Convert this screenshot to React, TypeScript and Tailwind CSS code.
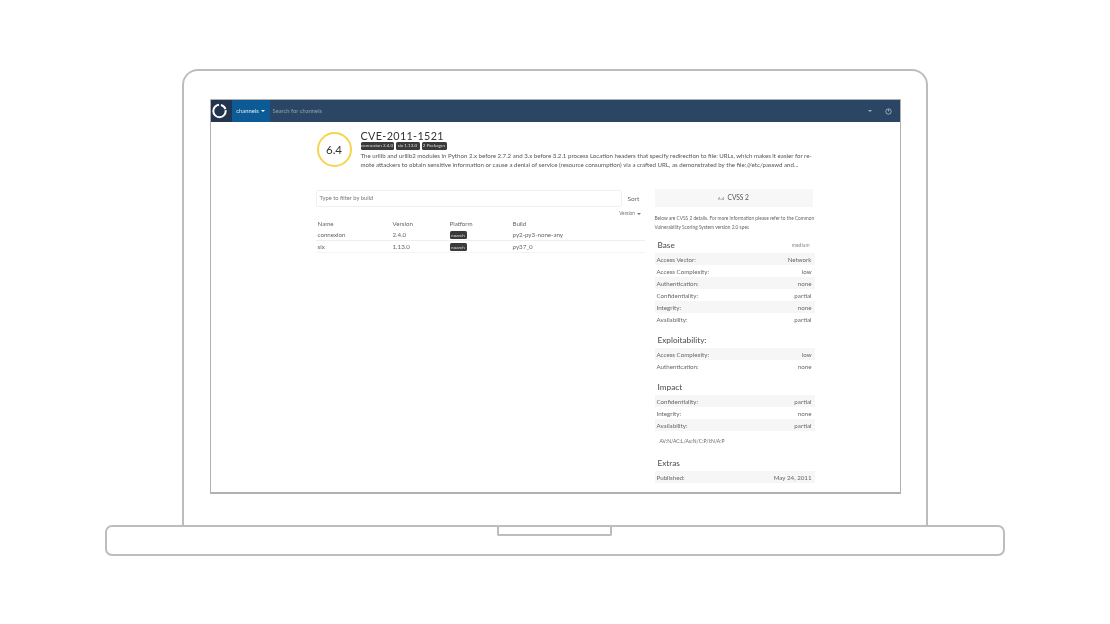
import React from 'react';

type Row = [string, string];

const base: Row[] = [
  ['Access Vector:', 'Network'],
  ['Access Complexity:', 'low'],
  ['Authentication:', 'none'],
  ['Confidentiality:', 'partial'],
  ['Integrity:', 'none'],
  ['Availability:', 'partial'],
];
const exploitability: Row[] = [
  ['Access Complexity:', 'low'],
  ['Authentication:', 'none'],
];
const impact: Row[] = [
  ['Confidentiality:', 'partial'],
  ['Integrity:', 'none'],
  ['Availability:', 'partial'],
];
const extras: Row[] = [['Published:', 'May 24, 2011']];

const Rows: React.FC<{ rows: Row[] }> = ({ rows }) => (
  <div className="w-[160px]">
    {rows.map(([k, v], i) => (
      <div
        key={k}
        className={`flex h-[12px] items-center justify-between pl-[2px] pr-[3px] text-[6.2px] text-[#666] ${i % 2 === 0 ? 'bg-[#f6f6f6]' : ''}`}
      >
        <span>{k}</span>
        <span>{v}</span>
      </div>
    ))}
  </div>
);

const Heading: React.FC<{ title: string; right?: string; className: string }> = ({ title, right, className }) => (
  <div className={`flex h-[12px] w-[160px] items-center justify-between pl-[3px] pr-[5px] ${className}`}>
    <span className="text-[8.2px] font-medium text-[#555]">{title}</span>
    {right && <span className="text-[5px] text-[#888]">{right}</span>}
  </div>
);

const Badge: React.FC<{ children: React.ReactNode; className?: string }> = ({ children, className }) => (
  <span className={`flex h-[7.5px] items-center justify-center rounded-[1.5px] bg-[#3a3a3a] text-[4.6px] leading-none text-[#ddd] ${className ?? ''}`}>
    {children}
  </span>
);

const Browser: React.FC = () => (
  <div className="flex h-[395px] w-[691px] flex-col overflow-hidden border border-b-2 border-[#b0b0b0] bg-white font-['Lato',sans-serif]">
    {/* top bar */}
    <div className="flex h-[22px] shrink-0 items-center bg-[#2a4664] blur-[0.4px]">
      <div className="flex h-full w-[21px] items-center justify-start bg-[#23344f]">
        <svg width="18" height="18" viewBox="0 0 18 18">
          <circle cx="8.5" cy="9" r="6.2" fill="none" stroke="#fff" strokeWidth="2" strokeDasharray="28 2 6 1" />
        </svg>
      </div>
      <div className="flex h-full w-[38px] items-center justify-center gap-[2px] bg-[#0d5b96] text-[5.8px] text-[#dfe8f0]">
        channels
        <span className="h-0 w-0 border-x-[2px] border-t-[2px] border-x-transparent border-t-white" />
      </div>
      <span className="ml-[3px] text-[5.8px] text-[#8ea2b6]">Search for channels</span>
      <span className="ml-auto h-0 w-0 border-x-[2px] border-t-[2px] border-x-transparent border-t-[#9fb0c0]" />
      <svg className="ml-[13px] mr-[8px]" width="7" height="7" viewBox="0 0 7 7">
        <circle cx="3.5" cy="3.5" r="2.7" fill="none" stroke="#c4d0dc" strokeWidth="0.7" />
        <path d="M3.5 1.2V3.5" stroke="#c4d0dc" strokeWidth="0.7" />
      </svg>
    </div>

    <div className="blur-[0.6px]">
      {/* CVE header */}
      <div className="ml-[106px] mt-[8px] flex">
        <div className="mt-[2px] flex h-[35px] w-[35px] shrink-0 items-center justify-center rounded-full border-[2.5px] border-[#f5d44f] text-[11.5px] text-[#333]">
          6.4
        </div>
        <div className="ml-[9px] w-[460px]">
          <div className="text-[10.8px] leading-[12px] tracking-[0.35px] text-[#333]">CVE-2011-1521</div>
          <div className="flex gap-[2px]">
            <Badge className="w-[33px]">connexion 2.4.0</Badge>
            <Badge className="w-[24px]">six 1.13.0</Badge>
            <Badge className="w-[25px]">2 Packages</Badge>
          </div>
          <p className="mt-[1px] text-[6.14px] leading-[9.4px] text-[#555]">
            The urllib and urllib2 modules in Python 2.x before 2.7.2 and 3.x before 3.2.1 process Location headers that specify redirection to file: URLs, which makes it easier for re-
            <br />
            mote attackers to obtain sensitive information or cause a denial of service (resource consumption) via a crafted URL, as demonstrated by the file:///etc/passwd and...
          </p>
        </div>
      </div>

      <div className="ml-[105px] mt-[20px] flex items-start">
        {/* builds */}
        <div className="mt-[1px] w-[329px]">
          <div className="flex h-[17px] items-center">
            <div className="flex h-full w-[306px] items-center rounded-[2px] border border-[#f0f0f0] pl-[3px] text-[5.8px] text-[#777]">
              Type to filter by build
            </div>
            <span className="ml-[6px] text-[6.4px] text-[#666]">Sort</span>
          </div>
          <div className="mt-[3px] flex h-[7px] items-center justify-end gap-[1.5px] pr-[4px] text-[4.8px] leading-[7px] text-[#777]">
            Version
            <span className="h-0 w-0 border-x-[2px] border-t-[2px] border-x-transparent border-t-[#777]" />
          </div>
          <div className="text-[6.2px] text-[#666]">
            <div className="grid h-[12px] grid-cols-[75px_57px_63px_1fr] items-center pl-[2px]">
              <span>Name</span>
              <span>Version</span>
              <span>Platform</span>
              <span>Build</span>
            </div>
            <div className="grid h-[12px] grid-cols-[75px_57px_63px_1fr] items-center border-b border-[#eee] pl-[2px]">
              <span>connexion</span>
              <span>2.4.0</span>
              <span><Badge className="w-[17px]">noarch</Badge></span>
              <span>py2-py3-none-any</span>
            </div>
            <div className="grid h-[12px] grid-cols-[75px_57px_63px_1fr] items-center border-b border-[#f4f4f4] pl-[2px]">
              <span>six</span>
              <span>1.13.0</span>
              <span><Badge className="w-[17px]">noarch</Badge></span>
              <span>py37_0</span>
            </div>
          </div>
        </div>

        {/* cvss */}
        <div className="ml-[10px] w-[160px]">
          <div className="flex h-[18px] w-[158px] items-center justify-center gap-[3px] bg-[#f7f7f7] text-[6.6px] text-[#555]">
            <span className="text-[4.6px] text-[#777]">6.4</span>
            CVSS 2
          </div>
          <p className="mt-[7px] text-[4.8px] leading-[9px] text-[#666]">
            Below are CVSS 2 details. For more information please refer to the Common
            <br />
            Vulnerability Scoring System version 2.0 spec
          </p>
          <Heading title="Base" right="medium" className="mt-[7px]" />
          <div className="mt-[2px]"><Rows rows={base} /></div>
          <Heading title="Exploitability:" className="mt-[9px]" />
          <div className="mt-[2px]"><Rows rows={exploitability} /></div>
          <Heading title="Impact" className="mt-[9px]" />
          <div className="mt-[2px]"><Rows rows={impact} /></div>
          <div className="mt-[4px] h-[12px] pl-[5px] text-[5px] leading-[12px] text-[#666]">AV:N/AC:L/Au:N/C:P/I:N/A:P</div>
          <Heading title="Extras" className="mt-[10px]" />
          <div className="mt-[2px]"><Rows rows={extras} /></div>
        </div>
      </div>
    </div>
  </div>
);

const App: React.FC = () => (
  <div className="flex h-[624px] w-[1110px] flex-col items-center overflow-hidden bg-white pt-[69px]">
    {/* lid */}
    <div className="flex h-[456px] w-[746px] shrink-0 flex-col items-center rounded-t-[16px] border-x-2 border-t-2 border-[#bdbdbd] pt-[28px]">
      <Browser />
    </div>
    {/* base */}
    <div className="flex h-[31px] w-[900px] shrink-0 justify-center rounded-[7px] border-2 border-[#bdbdbd]">
      <div className="ml-[-2px] h-[9px] w-[115px] rounded-b-[2px] border-x-2 border-b-2 border-[#bdbdbd]" />
    </div>
  </div>
);

export default App;
